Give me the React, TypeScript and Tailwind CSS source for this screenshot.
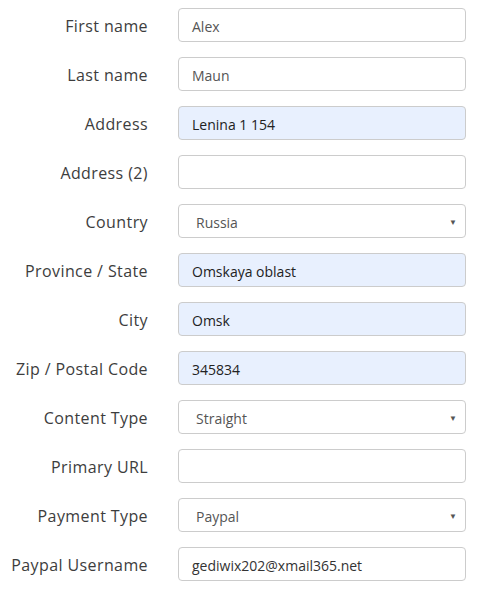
import React from "react"

type Field = {
  label: string
  value: string
  kind?: "input" | "select"
  filled?: boolean
  dark?: boolean
}

const fields: Field[] = [
  { label: "First name", value: "Alex" },
  { label: "Last name", value: "Maun" },
  { label: "Address", value: "Lenina 1 154", filled: true },
  { label: "Address (2)", value: "" },
  { label: "Country", value: "Russia", kind: "select" },
  { label: "Province / State", value: "Omskaya oblast", filled: true },
  { label: "City", value: "Omsk", filled: true },
  { label: "Zip / Postal Code", value: "345834", filled: true },
  { label: "Content Type", value: "Straight", kind: "select" },
  { label: "Primary URL", value: "" },
  { label: "Payment Type", value: "Paypal", kind: "select" },
  { label: "Paypal Username", value: "gediwix202@xmail365.net", dark: true },
]

function Row({ field }: { field: Field }) {
  const base =
    "w-[288px] h-[34px] rounded-[4px] border border-[#cccccc] flex items-center text-[14px] pt-[2px] shrink-0"

  return (
    <div className="flex items-center">
      <label className="w-[148px] text-right text-[16px] tracking-[0.4px] text-[#3d3d3d] pt-[2px] shrink-0">
        {field.label}
      </label>
      {field.kind === "select" ? (
        <div className={`${base} ml-[30px] relative bg-white pl-[17px] text-[#555555]`}>
          <span>{field.value}</span>
          <span className="absolute right-[8px] top-[11px] text-[8px] text-[#555]">▼</span>
        </div>
      ) : (
        <div
          className={`${base} ml-[30px] pl-[13px] ${
            field.filled ? "bg-[#e8f0fe] text-[#222]" : "bg-white"
          } ${field.dark ? "text-[#333]" : field.filled ? "" : "text-[#555555]"}`}
        >
          {field.value}
        </div>
      )}
    </div>
  )
}

export default function App() {
  return (
    <div
      className="w-[481px] h-[589px] bg-white pt-[8px] flex flex-col gap-[15px]"
      style={{ fontFamily: "'Open Sans', 'Liberation Sans', sans-serif" }}
    >
      {fields.map((f) => (
        <Row key={f.label} field={f} />
      ))}
    </div>
  )
}
